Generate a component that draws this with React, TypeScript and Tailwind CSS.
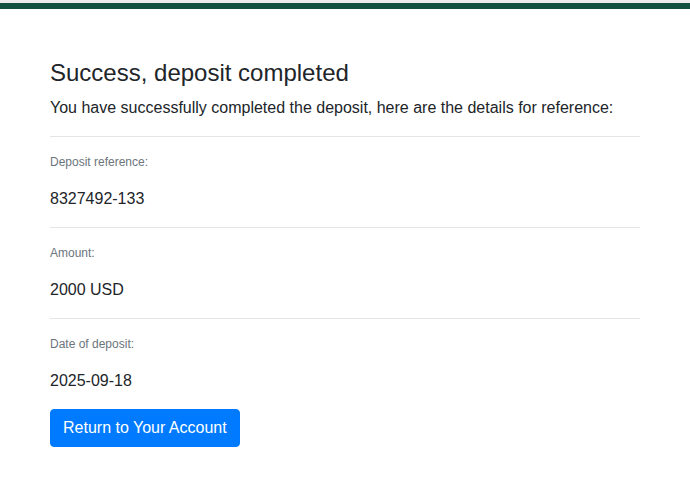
export default function App() {
  const rows = [
    { label: "Deposit reference:", value: "8327492-133" },
    { label: "Amount:", value: "2000 USD" },
    { label: "Date of deposit:", value: "2025-09-18" },
  ];

  return (
    <div className="min-h-screen bg-white font-['Liberation_Sans',Arial,sans-serif] text-[#212529]">
      {/* top strip */}
      <div className="h-[3px] bg-[#ececec]" />
      <div className="h-[6px] bg-[#12523f]" />

      <div className="pl-[50px] pt-[50px] w-[640px]">
        <h1 className="text-[24px] leading-[28.8px] font-normal">Success, deposit completed</h1>
        <p className="mt-[8px] text-[16px] leading-[24px]">
          You have successfully completed the deposit, here are the details for reference:
        </p>

        {rows.map((row) => (
          <div key={row.label}>
            <hr className="mt-[16px] border-0 border-t border-[#e5e5e5]" />
            <div className="mt-[16px] text-[12px] leading-[18px] text-[#6c757d]">{row.label}</div>
            <div className="mt-[16px] text-[16px] leading-[24px]">{row.value}</div>
          </div>
        ))}

        <button
          type="button"
          className="mt-[16px] px-[12px] py-[6px] border border-[#007bff] rounded-[4px] bg-[#007bff] text-white text-[16px] leading-[24px]"
        >
          Return to Your Account
        </button>
      </div>
    </div>
  );
}
